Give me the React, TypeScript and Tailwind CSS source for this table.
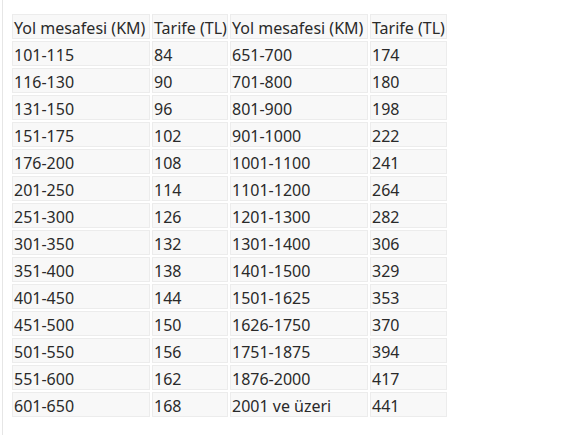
const rows: [string, string, string, string][] = [
  ["101-115", "84", "651-700", "174"],
  ["116-130", "90", "701-800", "180"],
  ["131-150", "96", "801-900", "198"],
  ["151-175", "102", "901-1000", "222"],
  ["176-200", "108", "1001-1100", "241"],
  ["201-250", "114", "1101-1200", "264"],
  ["251-300", "126", "1201-1300", "282"],
  ["301-350", "132", "1301-1400", "306"],
  ["351-400", "138", "1401-1500", "329"],
  ["401-450", "144", "1501-1625", "353"],
  ["451-500", "150", "1626-1750", "370"],
  ["501-550", "156", "1751-1875", "394"],
  ["551-600", "162", "1876-2000", "417"],
  ["601-650", "168", "2001 ve üzeri", "441"],
];

const widths = ["w-[138px]", "w-[76px]", "w-[138px]", "w-[77px]"];

export default function App() {
  const cell =
    "h-[25px] p-0 pt-[3px] pl-[1px] bg-[#f8f8f8] border border-[#ececec] text-left font-normal align-middle leading-none whitespace-nowrap";

  return (
    <div className="pl-[2px] bg-white">
      <div className="h-[435px] border-l border-[#e6e6e6] pl-[7px] pt-[12px] font-['Noto_Sans',sans-serif] text-[16px] text-[#2a2a2a]">
        <table className="w-[439px] border-separate border-spacing-[2px] table-fixed">
          <thead>
            <tr>
              {["Yol mesafesi (KM)", "Tarife (TL)", "Yol mesafesi (KM)", "Tarife (TL)"].map((h, i) => (
                <th key={i} className={`${cell} ${widths[i]}`}>
                  {h}
                </th>
              ))}
            </tr>
          </thead>
          <tbody>
            {rows.map((r, i) => (
              <tr key={i}>
                {r.map((v, j) => (
                  <td key={j} className={`${cell} ${widths[j]}`}>
                    {v}
                  </td>
                ))}
              </tr>
            ))}
          </tbody>
        </table>
      </div>
    </div>
  );
}
